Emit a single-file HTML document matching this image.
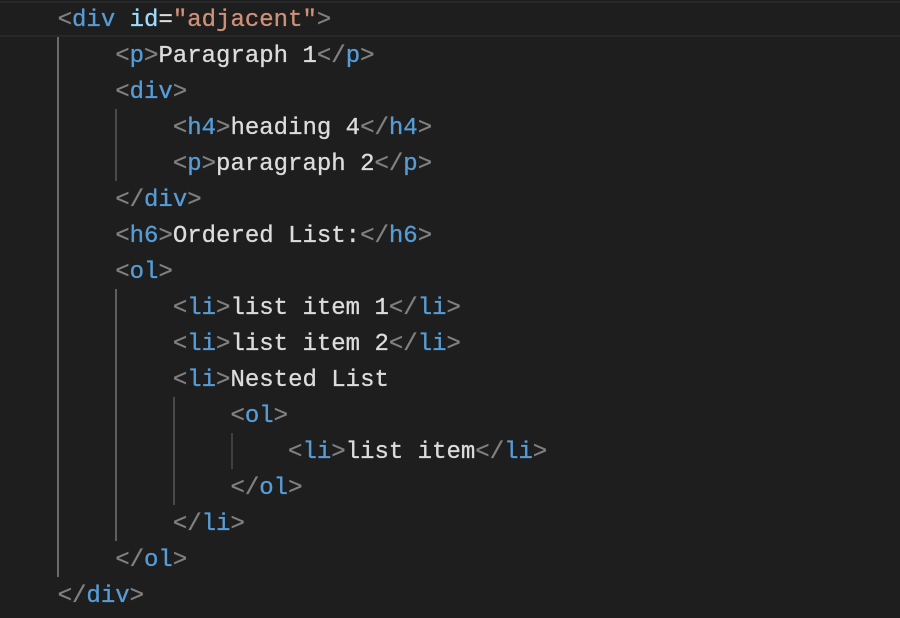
<!DOCTYPE html>
<html><head><style>
html,body{margin:0;padding:0;background:#1e1e1e;width:900px;height:618px;overflow:hidden}
.code{position:absolute;left:0;top:3px;font-family:"Liberation Mono",monospace;font-size:24px;line-height:36px;color:#dcdcdc;white-space:pre;-webkit-text-stroke:0.3px currentColor}
.t{color:#808080}.n{color:#569cd6}.a{color:#9cdcfe}.s{color:#ce9178}
.cur{position:absolute;left:0;top:1px;width:900px;height:32px;border-top:2px solid #282828;border-bottom:2px solid #282828}
.g{position:absolute;width:2px;background:#5a5a5a}
</style></head><body>
<div class="cur"></div>
<div class="g" style="left:57px;top:37px;height:540px;background:#6a6a6a"></div>
<div class="g" style="left:115px;top:109px;height:72px;background:#4a4a4a"></div>
<div class="g" style="left:115px;top:289px;height:252px;background:#5e5e5e"></div>
<div class="g" style="left:173px;top:397px;height:108px;background:#4a4a4a"></div>
<div class="g" style="left:231px;top:433px;height:36px;background:#404040"></div>
<div class="code"><span class="t">    &lt;</span><span class="n">div</span> <span class="a">id</span>=<span class="s">"adjacent"</span><span class="t">&gt;</span>
<span class="t">        &lt;</span><span class="n">p</span><span class="t">&gt;</span>Paragraph 1<span class="t">&lt;/</span><span class="n">p</span><span class="t">&gt;</span>
<span class="t">        &lt;</span><span class="n">div</span><span class="t">&gt;</span>
<span class="t">            &lt;</span><span class="n">h4</span><span class="t">&gt;</span>heading 4<span class="t">&lt;/</span><span class="n">h4</span><span class="t">&gt;</span>
<span class="t">            &lt;</span><span class="n">p</span><span class="t">&gt;</span>paragraph 2<span class="t">&lt;/</span><span class="n">p</span><span class="t">&gt;</span>
<span class="t">        &lt;/</span><span class="n">div</span><span class="t">&gt;</span>
<span class="t">        &lt;</span><span class="n">h6</span><span class="t">&gt;</span>Ordered List:<span class="t">&lt;/</span><span class="n">h6</span><span class="t">&gt;</span>
<span class="t">        &lt;</span><span class="n">ol</span><span class="t">&gt;</span>
<span class="t">            &lt;</span><span class="n">li</span><span class="t">&gt;</span>list item 1<span class="t">&lt;/</span><span class="n">li</span><span class="t">&gt;</span>
<span class="t">            &lt;</span><span class="n">li</span><span class="t">&gt;</span>list item 2<span class="t">&lt;/</span><span class="n">li</span><span class="t">&gt;</span>
<span class="t">            &lt;</span><span class="n">li</span><span class="t">&gt;</span>Nested List
<span class="t">                &lt;</span><span class="n">ol</span><span class="t">&gt;</span>
<span class="t">                    &lt;</span><span class="n">li</span><span class="t">&gt;</span>list item<span class="t">&lt;/</span><span class="n">li</span><span class="t">&gt;</span>
<span class="t">                &lt;/</span><span class="n">ol</span><span class="t">&gt;</span>
<span class="t">            &lt;/</span><span class="n">li</span><span class="t">&gt;</span>
<span class="t">        &lt;/</span><span class="n">ol</span><span class="t">&gt;</span>
<span class="t">    &lt;/</span><span class="n">div</span><span class="t">&gt;</span></div>
</body></html>
